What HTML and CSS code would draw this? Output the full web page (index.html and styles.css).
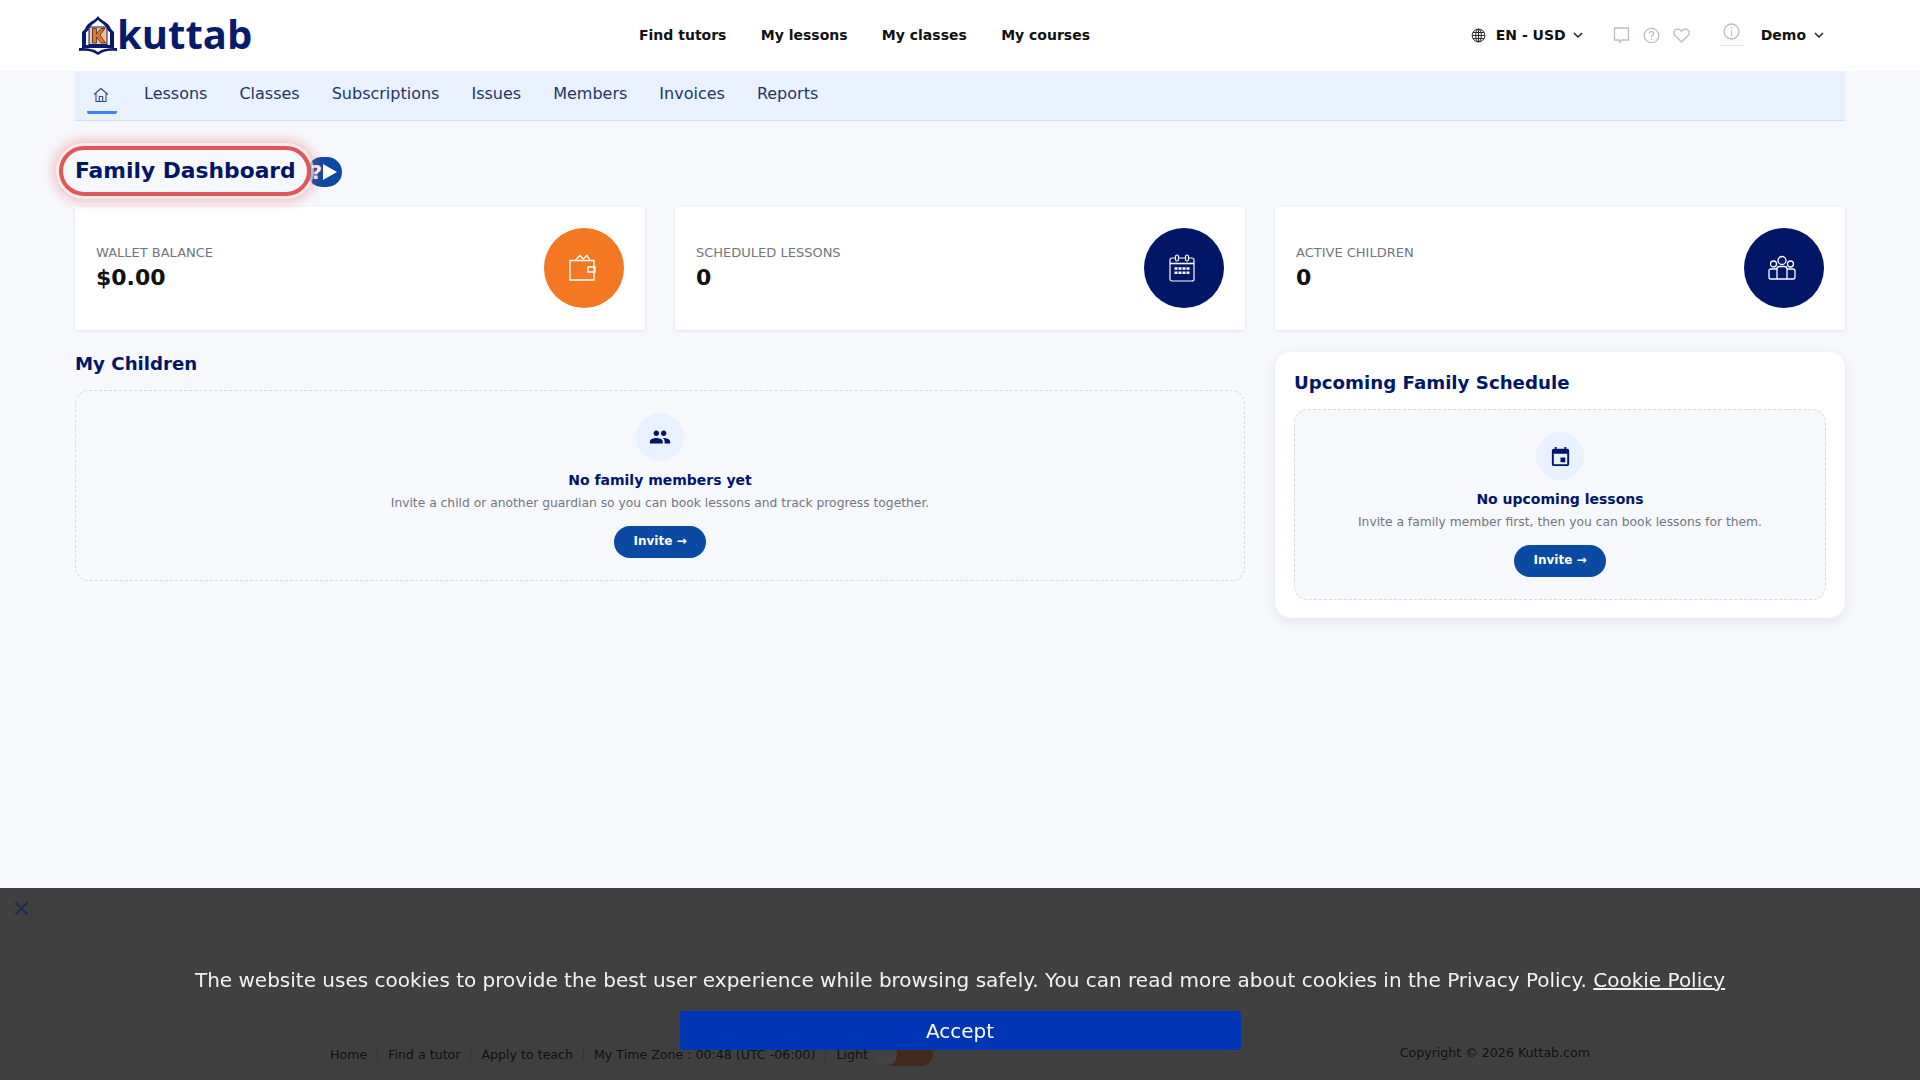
FILE: index.html
```html
<!DOCTYPE html>
<html lang="en">
<head>
  <meta charset="UTF-8" />
  <meta name="viewport" content="width=device-width, initial-scale=1.0" />
  <title>Family Dashboard - Kuttab</title>
  <link rel="stylesheet" href="styles.css">
</head>
<body>
  <header class="topbar">
    <a class="logo" href="#">
      <svg class="logo-mark" width="40" height="42" viewBox="0 0 40 42">
        <path d="M20 1 C23 6 31 7 33 14 L36 17 V33 H4 V17 L7 14 C9 7 17 6 20 1 Z" fill="#0a1a6b"/>
        <path d="M20 5 C23 8 28 10 29.500 15 L32 17.500 V30 H8 V17.500 L10.500 15 C12 10 17 8 20 5 Z" fill="#fff"/>
        <rect x="11" y="12" width="18" height="17.500" fill="#f4c39a" stroke="#0a1a6b" stroke-width="1"/>
        <path d="M14.500 13.500 H18.500 V19 L23 13.500 H27 L22 20 L27.500 28 H23 L18.500 22 V28 H14.500 Z" fill="#e8741c" stroke="#1a1a40" stroke-width=".7"/>
        <path d="M1 33 H4 C10 33 16 34 20 37 C24 34 30 33 36 33 H39 V36 C31 35 25 36 20 40 C15 36 9 35 1 36 Z" fill="#0a1a6b"/>
      </svg>
      <span class="logo-text">kuttab</span>
    </a>
    <nav class="main-nav">
      <a href="#">Find tutors</a>
      <a href="#">My lessons</a>
      <a href="#">My classes</a>
      <a href="#">My courses</a>
    </nav>
    <div class="top-actions">
      <a class="lang" href="#">
        <svg width="15" height="15" viewBox="0 0 16 16" fill="none" stroke="#222" stroke-width="1">
          <circle cx="8" cy="8" r="6.800"/>
          <ellipse cx="8" cy="8" rx="3" ry="6.800"/>
          <path d="M8 1.200 V14.800 M1.200 8 H14.800 M2.200 4.800 H13.800 M2.200 11.200 H13.800"/>
        </svg>
        <span>EN - USD</span>
        <svg class="chev" width="10" height="10" viewBox="0 0 10 10" fill="none" stroke="#222" stroke-width="1.500"><path d="M1 3 L5 7 L9 3"/></svg>
      </a>
      <div class="quick-icons">
        <svg width="17" height="17" viewBox="0 0 17 17" fill="none" stroke="#b9bdc4" stroke-width="1.300"><path d="M1.500 1 H15.500 V13 H9 L6.500 15.500 V13 H1.500 Z" stroke-linejoin="round"/></svg>
        <svg width="17" height="17" viewBox="0 0 17 17" fill="none" stroke="#b9bdc4" stroke-width="1.300"><circle cx="8.500" cy="8.500" r="7.200"/><path d="M6.300 6.700 C6.300 4 10.700 4 10.700 6.700 C10.700 8.300 8.500 8.300 8.500 10"/><path d="M8.500 11.700 V13"/></svg>
        <svg width="17" height="17" viewBox="0 0 17 17" fill="none" stroke="#b9bdc4" stroke-width="1.300"><path d="M8.500 15 L1.900 8.500 C-0.500 5.500 1.500 2 4.500 2 C6.300 2 7.700 3 8.500 4.500 C9.300 3 10.700 2 12.500 2 C15.500 2 17.500 5.500 15.100 8.500 Z" stroke-linejoin="round"/></svg>
      </div>
      <div class="info-icon">
        <svg width="17" height="17" viewBox="0 0 17 17" fill="none" stroke="#b9bdc4" stroke-width="1.300"><circle cx="8.500" cy="8.500" r="7.500"/><path d="M8.500 7.500 V13 M8.500 4 V5.500"/></svg>
      </div>
      <a class="user" href="#">
        <span>Demo</span>
        <svg class="chev" width="10" height="10" viewBox="0 0 10 10" fill="none" stroke="#222" stroke-width="1.500"><path d="M1 3 L5 7 L9 3"/></svg>
      </a>
    </div>
  </header>

  <main class="page">
    <nav class="sub-nav">
      <a class="active home-tab" href="#">
        <svg width="16" height="16" viewBox="0 0 16 16" fill="none" stroke="#2d4a80" stroke-width="1.100"><path d="M1 7.500 L8 1.500 L15 7.500 M3 6.500 V14.500 H13 V6.500 M6.300 14.500 V9.500 H9.700 V14.500" stroke-linejoin="round"/></svg>
      </a>
      <a href="#">Lessons</a>
      <a href="#">Classes</a>
      <a href="#">Subscriptions</a>
      <a href="#">Issues</a>
      <a href="#">Members</a>
      <a href="#">Invoices</a>
      <a href="#">Reports</a>
    </nav>

    <div class="title-row">
      <h1 class="page-title">Family Dashboard</h1>
      <button class="help-btn">
        <span class="help-mark">?</span>
        <svg width="16" height="18" viewBox="0 0 16 18"><path d="M1 1 L15 9 L1 17 Z" fill="#fff"/></svg>
      </button>
    </div>

    <section class="stats">
      <div class="stat-card">
        <div>
          <div class="stat-label">WALLET BALANCE</div>
          <div class="stat-value">$0.00</div>
        </div>
        <div class="stat-icon orange">
          <svg width="28" height="28" viewBox="0 0 28 28" fill="none" stroke="#fff" stroke-width="1.300">
            <path d="M2 6.500 H26 V26 H2 Z"/>
            <path d="M20 13 H27 V18 H20 Z"/>
            <path d="M7 6.500 L12 1.500 L15 5 L19 1.500 L22 6.500"/>
          </svg>
        </div>
      </div>
      <div class="stat-card">
        <div>
          <div class="stat-label">SCHEDULED LESSONS</div>
          <div class="stat-value">0</div>
        </div>
        <div class="stat-icon">
          <svg width="28" height="28" viewBox="0 0 28 28" fill="none" stroke="#fff" stroke-width="1.200">
            <rect x="2" y="4" width="24" height="23" rx="2"/>
            <path d="M2 9.500 H26" stroke-width="1.600"/>
            <rect x="7.500" y="1" width="3" height="6" rx="1.500" fill="#021668"/>
            <rect x="17.500" y="1" width="3" height="6" rx="1.500" fill="#021668"/>
            <path d="M6.500 14.500 H21.500 M6.500 18.800 H21.500" stroke-width="2.600" stroke-dasharray="3 1"/>
          </svg>
        </div>
      </div>
      <div class="stat-card">
        <div>
          <div class="stat-label">ACTIVE CHILDREN</div>
          <div class="stat-value">0</div>
        </div>
        <div class="stat-icon">
          <svg width="28" height="26" viewBox="0 0 28 26" fill="none" stroke="#fff" stroke-width="1.300">
            <circle cx="14" cy="5.500" r="4"/>
            <circle cx="5.500" cy="9" r="3"/>
            <circle cx="22.500" cy="9" r="3"/>
            <path d="M9 24 V14 Q9 11.500 11.500 11.500 H16.500 Q19 11.500 19 14 V24"/>
            <path d="M9 14 H3 Q1 14 1 16 V22 Q1 24 3 24 H25 Q27 24 27 22 V16 Q27 14 25 14 H19"/>
          </svg>
        </div>
      </div>
    </section>

    <section class="columns">
      <div class="children">
        <h2 class="section-title">My Children</h2>
        <div class="empty-box">
          <div class="empty-icon">
            <svg width="22" height="22" viewBox="0 0 24 24" fill="#021668"><path d="M16 11c1.660 0 2.990-1.340 2.990-3S17.660 5 16 5s-3 1.340-3 3 1.340 3 3 3zm-8 0c1.660 0 2.990-1.340 2.990-3S9.660 5 8 5 5 6.340 5 8s1.340 3 3 3zm0 2c-2.330 0-7 1.170-7 3.500V19h14v-2.500c0-2.330-4.670-3.500-7-3.500zm8 0c-.290 0-.620.020-.970.050 1.160.840 1.970 1.970 1.970 3.450V19h6v-2.500c0-2.330-4.670-3.500-7-3.500z"/></svg>
          </div>
          <div class="empty-title">No family members yet</div>
          <p class="empty-text">Invite a child or another guardian so you can book lessons and track progress together.</p>
          <a class="invite-btn" href="#">Invite →</a>
        </div>
      </div>
      <aside class="schedule-card">
        <h2 class="section-title">Upcoming Family Schedule</h2>
        <div class="empty-box">
          <div class="empty-icon">
            <svg width="23" height="23" viewBox="0 0 24 24" fill="#021668"><path d="M17 13h-5v5h5v-5zM16 2v2H8V2H6v2H5c-1.110 0-2 .9-2 2v14c0 1.100.89 2 2 2h14c1.100 0 2-.9 2-2V6c0-1.100-.9-2-2-2h-1V2h-2zm3 18H5V9h14v11z"/></svg>
          </div>
          <div class="empty-title">No upcoming lessons</div>
          <p class="empty-text">Invite a family member first, then you can book lessons for them.</p>
          <a class="invite-btn" href="#">Invite →</a>
        </div>
      </aside>
    </section>
  </main>

  <footer class="site-footer">
    <div class="footer-links">
      <a href="#">Home</a>
      <a href="#">Find a tutor</a>
      <a href="#">Apply to teach</a>
      <span>My Time Zone : 00:48 (UTC -06:00)</span>
      <span class="theme-toggle">Light <i class="toggle-track"><b class="toggle-knob"></b></i></span>
    </div>
    <div class="copyright">Copyright © 2026 Kuttab.com</div>
  </footer>

  <div class="cookie-bar">
    <svg class="cookie-close" width="15" height="15" viewBox="0 0 16 16" fill="none" stroke="#1e2f4d" stroke-width="2.400"><path d="M1.500 1.500 L14.500 14.500 M14.500 1.500 L1.500 14.500"/></svg>
    <p class="cookie-text">The website uses cookies to provide the best user experience while browsing safely. You can read more about cookies in the Privacy Policy. <a href="#">Cookie Policy</a></p>
    <button class="cookie-accept">Accept</button>
  </div>
</body>
</html>
```

FILE: styles.css
```css
* {
  margin: 0;
  padding: 0;
  box-sizing: border-box;
  font-family: 'DejaVu Sans', 'Liberation Sans', sans-serif;
}

body {
  background-color: #f7f8fc;
  color: #111;
  min-height: 100vh;
  display: flex;
  flex-direction: column;
}

a {
  text-decoration: none;
  color: inherit;
}

.topbar {
  height: 71px;
  background: #fff;
  display: flex;
  align-items: center;
  padding: 0 96px 0 78px;
}

.logo {
  display: flex;
  align-items: center;
  width: 561px;
}

.logo-mark {
  flex-shrink: 0;
}

.logo-text {
  font-family: 'Open Sans', sans-serif;
  font-weight: 700;
  font-size: 40px;
  line-height: 1;
  color: #0a1a6b;
  margin-left: -1px;
  margin-top: -3px;
}

.main-nav {
  display: flex;
  gap: 34.300px;
  font-size: 14px;
  font-weight: 700;
  color: #111;
  margin-top: -1px;
}

.top-actions {
  margin-left: auto;
  display: flex;
  align-items: center;
  font-size: 14px;
  font-weight: 700;
  color: #111;
}

.lang,
.user {
  display: flex;
  align-items: center;
  margin-top: -1px;
}

.lang span {
  margin: 0 7px 0 10px;
}

.user span {
  margin-right: 8px;
}

.quick-icons {
  display: flex;
  gap: 13px;
  margin-left: 30px;
}

.info-icon {
  margin-left: 30px;
  margin-right: 18px;
  padding: 0 3px 2px;
  border-bottom: 1px dotted #ccc;
  margin-top: -3px;
}

.page {
  flex: 1;
  padding: 0 75px;
}

.sub-nav {
  height: 50px;
  background: #e8f1fd;
  border-bottom: 1px solid #cfe2fb;
  display: flex;
  align-items: flex-start;
  padding-left: 12px;
  gap: 32px;
  font-size: 16px;
  color: #1f3566;
}

.sub-nav a {
  height: 43px;
  padding-top: 13px;
}

.home-tab {
  width: 30px;
  display: flex;
  justify-content: center;
  margin-right: -5px;
  border-bottom: 3px solid #3b82f6;
  border-radius: 0 0 2px 2px;
}

.home-tab svg {
  margin-top: 3px;
  margin-left: -2px;
}

.title-row {
  display: flex;
  align-items: center;
  margin-top: 30px;
  height: 40px;
}

.page-title {
  font-size: 21.800px;
  font-weight: 700;
  color: #021668;
  position: relative;
  z-index: 2;
  padding: 5px 0;
  line-height: 30px;
  white-space: nowrap;
}

.page-title::before {
  content: "";
  position: absolute;
  top: -5px;
  bottom: -5px;
  left: -16px;
  right: -15px;
  border-radius: 26px;
  border: 4px solid #e15759;
  box-shadow: 0 0 0 3px rgba(255, 255, 255, .6), 0 0 12px 6px rgba(225, 87, 89, .35);
  pointer-events: none;
}

.help-btn {
  width: 35px;
  height: 30px;
  margin-left: 11px;
  margin-top: 1px;
  border: none;
  border-radius: 15px;
  background: #0b4aa2;
  display: flex;
  align-items: center;
  justify-content: center;
}

.help-mark {
  color: #fff;
  font-size: 20px;
  font-weight: 700;
  line-height: 1;
}

.stats {
  display: grid;
  grid-template-columns: repeat(3, 1fr);
  gap: 30px;
  margin-top: 16px;
}

.stat-card {
  height: 123px;
  background: #fff;
  box-shadow: 0 1px 3px rgba(20, 30, 80, .08);
  display: flex;
  align-items: center;
  justify-content: space-between;
  padding: 0 21px;
}

.stat-label {
  font-size: 13px;
  color: #6f7682;
  line-height: 18px;
  margin-bottom: 1px;
}

.stat-value {
  font-size: 22px;
  font-weight: 700;
  color: #111;
  line-height: 30px;
}

.stat-icon {
  width: 80px;
  height: 80px;
  margin-bottom: 1px;
  border-radius: 50%;
  background: #021668;
  display: flex;
  align-items: center;
  justify-content: center;
  padding-right: 5px;
}

.stat-icon.orange {
  background: #f47721;
}

.columns {
  display: grid;
  grid-template-columns: 1170px 570px;
  gap: 30px;
  margin-top: 22px;
  align-items: start;
}

.section-title {
  font-size: 18.200px;
  font-weight: 700;
  color: #021668;
  line-height: 24px;
}

.children .section-title,
.schedule-card .section-title {
  margin-bottom: 14px;
}

.empty-box {
  height: 191px;
  border: 1px dashed #d5d9e2;
  border-radius: 14px;
  background: #f7f8fc;
  display: flex;
  flex-direction: column;
  align-items: center;
  padding-top: 22px;
}

.empty-icon {
  width: 48px;
  height: 48px;
  border-radius: 50%;
  background: #e8f1fd;
  display: flex;
  align-items: center;
  justify-content: center;
}

.empty-title {
  font-size: 14px;
  font-weight: 700;
  color: #021668;
  line-height: 20px;
  margin-top: 9px;
}

.empty-text {
  font-size: 12.300px;
  color: #6f7682;
  line-height: 18px;
  margin-top: 4px;
}

.invite-btn {
  margin-top: 14px;
  width: 92px;
  height: 32px;
  border-radius: 16px;
  background: #0b4aa2;
  color: #fff;
  font-size: 12px;
  font-weight: 700;
  display: flex;
  align-items: center;
  justify-content: center;
  padding-bottom: 2px;
}

.schedule-card {
  background: #fff;
  border-radius: 16px;
  box-shadow: 0 4px 16px rgba(20, 30, 80, .08);
  padding: 19px 19px 18px;
}

.site-footer {
  height: 60px;
  display: flex;
  align-items: flex-start;
  padding: 26px 330px 0;
  font-size: 12.600px;
  color: #444;
}

.footer-links {
  display: flex;
  align-items: center;
  height: 16px;
}

.footer-links > * {
  padding: 0 10px;
  border-left: 1px solid #ccc;
  line-height: 13px;
}

.footer-links > *:first-child {
  border-left: none;
  padding-left: 0;
}

.theme-toggle {
  display: flex;
  align-items: center;
}

.toggle-track {
  width: 60px;
  height: 24px;
  margin-left: 5px;
  border-radius: 12px;
  background: #ff9f6e;
  display: block;
}

.toggle-knob {
  display: block;
  width: 24px;
  height: 24px;
  border-radius: 50%;
  background: #ffffff;
}

.copyright {
  margin-left: auto;
  line-height: 14px;
}

.cookie-bar {
  position: fixed;
  left: 0;
  right: 0;
  bottom: 0;
  height: 192px;
  background: rgba(0, 0, 0, .74);
  display: flex;
  flex-direction: column;
  align-items: center;
  color: #fff;
}

.cookie-close {
  position: absolute;
  left: 14px;
  top: 13px;
}

.cookie-text {
  margin-top: 77px;
  font-size: 20px;
  line-height: 30px;
  color: #f2f2f2;
}

.cookie-text a {
  text-decoration: underline;
}

.cookie-accept {
  margin-top: 16px;
  width: 561px;
  height: 39px;
  border: none;
  border-radius: 3px;
  background: #0035b5;
  color: #fff;
  font-size: 20px;
}
```
